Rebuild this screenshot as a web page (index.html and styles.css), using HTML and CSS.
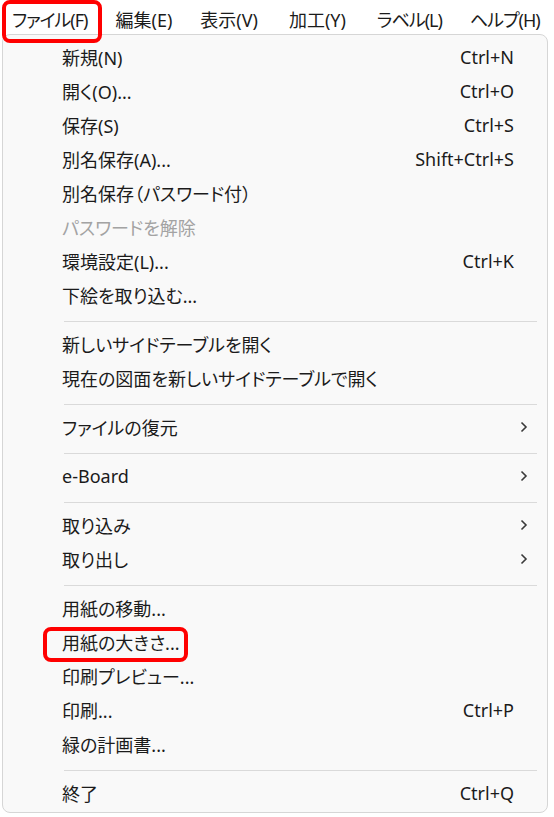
FILE: index.html
```html
<!DOCTYPE html>
<html lang="ja">
<head>
<meta charset="utf-8">
<title>ファイルメニュー</title>
<link rel="stylesheet" href="styles.css">
</head>
<body>
<div class="screen">
  <nav class="menubar">
    <span class="top-item kana">ファイル(F)</span>
    <span class="top-item">編集(E)</span>
    <span class="top-item">表示(V)</span>
    <span class="top-item wide">加工(Y)</span>
    <span class="top-item kana wide">ラベル(L)</span>
    <span class="top-item kana">ヘルプ(H)</span>
    <span class="mark mark-file"></span>
  </nav>
  <div class="menu">
    <div class="item"><span>新規(N)</span><span class="accel">Ctrl+N</span></div>
    <div class="item"><span>開く(O)...</span><span class="accel">Ctrl+O</span></div>
    <div class="item"><span>保存(S)</span><span class="accel">Ctrl+S</span></div>
    <div class="item"><span>別名保存(A)...</span><span class="accel">Shift+Ctrl+S</span></div>
    <div class="item"><span>別名保存（パスワード付）</span></div>
    <div class="item disabled"><span>パスワードを解除</span></div>
    <div class="item"><span>環境設定(L)...</span><span class="accel">Ctrl+K</span></div>
    <div class="item"><span>下絵を取り込む...</span></div>
    <div class="sep"></div>
    <div class="item"><span>新しいサイドテーブルを開く</span></div>
    <div class="item"><span>現在の図面を新しいサイドテーブルで開く</span></div>
    <div class="sep"></div>
    <div class="item sub"><span>ファイルの復元</span><svg class="chev" width="8" height="12" viewBox="0 0 8 12"><path d="M1.5 1.5 L6 6 L1.5 10.5" fill="none" stroke="#3a3a3a" stroke-width="1.6"/></svg></div>
    <div class="sep"></div>
    <div class="item sub"><span class="latin">e-Board</span><svg class="chev" width="8" height="12" viewBox="0 0 8 12"><path d="M1.5 1.5 L6 6 L1.5 10.5" fill="none" stroke="#3a3a3a" stroke-width="1.6"/></svg></div>
    <div class="sep"></div>
    <div class="item sub"><span>取り込み</span><svg class="chev" width="8" height="12" viewBox="0 0 8 12"><path d="M1.5 1.5 L6 6 L1.5 10.5" fill="none" stroke="#3a3a3a" stroke-width="1.6"/></svg></div>
    <div class="item sub"><span>取り出し</span><svg class="chev" width="8" height="12" viewBox="0 0 8 12"><path d="M1.5 1.5 L6 6 L1.5 10.5" fill="none" stroke="#3a3a3a" stroke-width="1.6"/></svg></div>
    <div class="sep"></div>
    <div class="item"><span>用紙の移動...</span></div>
    <div class="item"><span>用紙の大きさ...</span><span class="mark mark-size"></span></div>
    <div class="item"><span>印刷プレビュー...</span></div>
    <div class="item"><span>印刷...</span><span class="accel">Ctrl+P</span></div>
    <div class="item"><span>緑の計画書...</span></div>
    <div class="sep"></div>
    <div class="item"><span>終了</span><span class="accel">Ctrl+Q</span></div>
  </div>
</div>
</body>
</html>
```
FILE: styles.css
```css
html, body {
  margin: 0;
  padding: 0;
  background: #ffffff;
}
body {
  font-family: "Noto Sans", "Noto Sans CJK JP", sans-serif;
  font-size: 18px;
  color: #1b1b1b;
  font-feature-settings: "palt";
}
.screen {
  position: relative;
  width: 554px;
  height: 817px;
  overflow: hidden;
}
.menubar {
  position: relative;
  height: 34px;
  display: flex;
  align-items: center;
  gap: 28px;
  padding-left: 12px;
  padding-top: 5px;
  box-sizing: border-box;
  background: #ffffff;
  white-space: nowrap;
}
.top-item {
  line-height: 24px;
}
.top-item.kana {
  letter-spacing: -1px;
}
.top-item.wide {
  margin-left: 3px;
}
.menu {
  margin-left: 2px;
  width: 546px;
  box-sizing: border-box;
  border: 1px solid #d6d6d6;
  border-radius: 8px;
  background: #f9f9f9;
  padding: 5px 0 2px;
}
.item {
  position: relative;
  height: 34px;
  display: flex;
  align-items: center;
  justify-content: space-between;
  padding: 0 33px 0 59px;
  white-space: nowrap;
}
.item.sub {
  padding-right: 19px;
}
.item.disabled {
  color: #a3a3a3;
}
.accel {
  color: #1b1b1b;
}
.chev {
  display: block;
}
.sep {
  height: 1px;
  background: #dadada;
  margin: 9px 10px 5px 61px;
}
.mark {
  position: absolute;
  border: 4px solid #ff0000;
  border-radius: 8px;
  box-sizing: border-box;
  pointer-events: none;
}
.mark-file {
  left: 2px;
  top: 0;
  width: 100px;
  height: 43px;
  z-index: 2;
}
.mark-size {
  left: 40px;
  top: 2px;
  width: 145px;
  height: 35px;
}
```
